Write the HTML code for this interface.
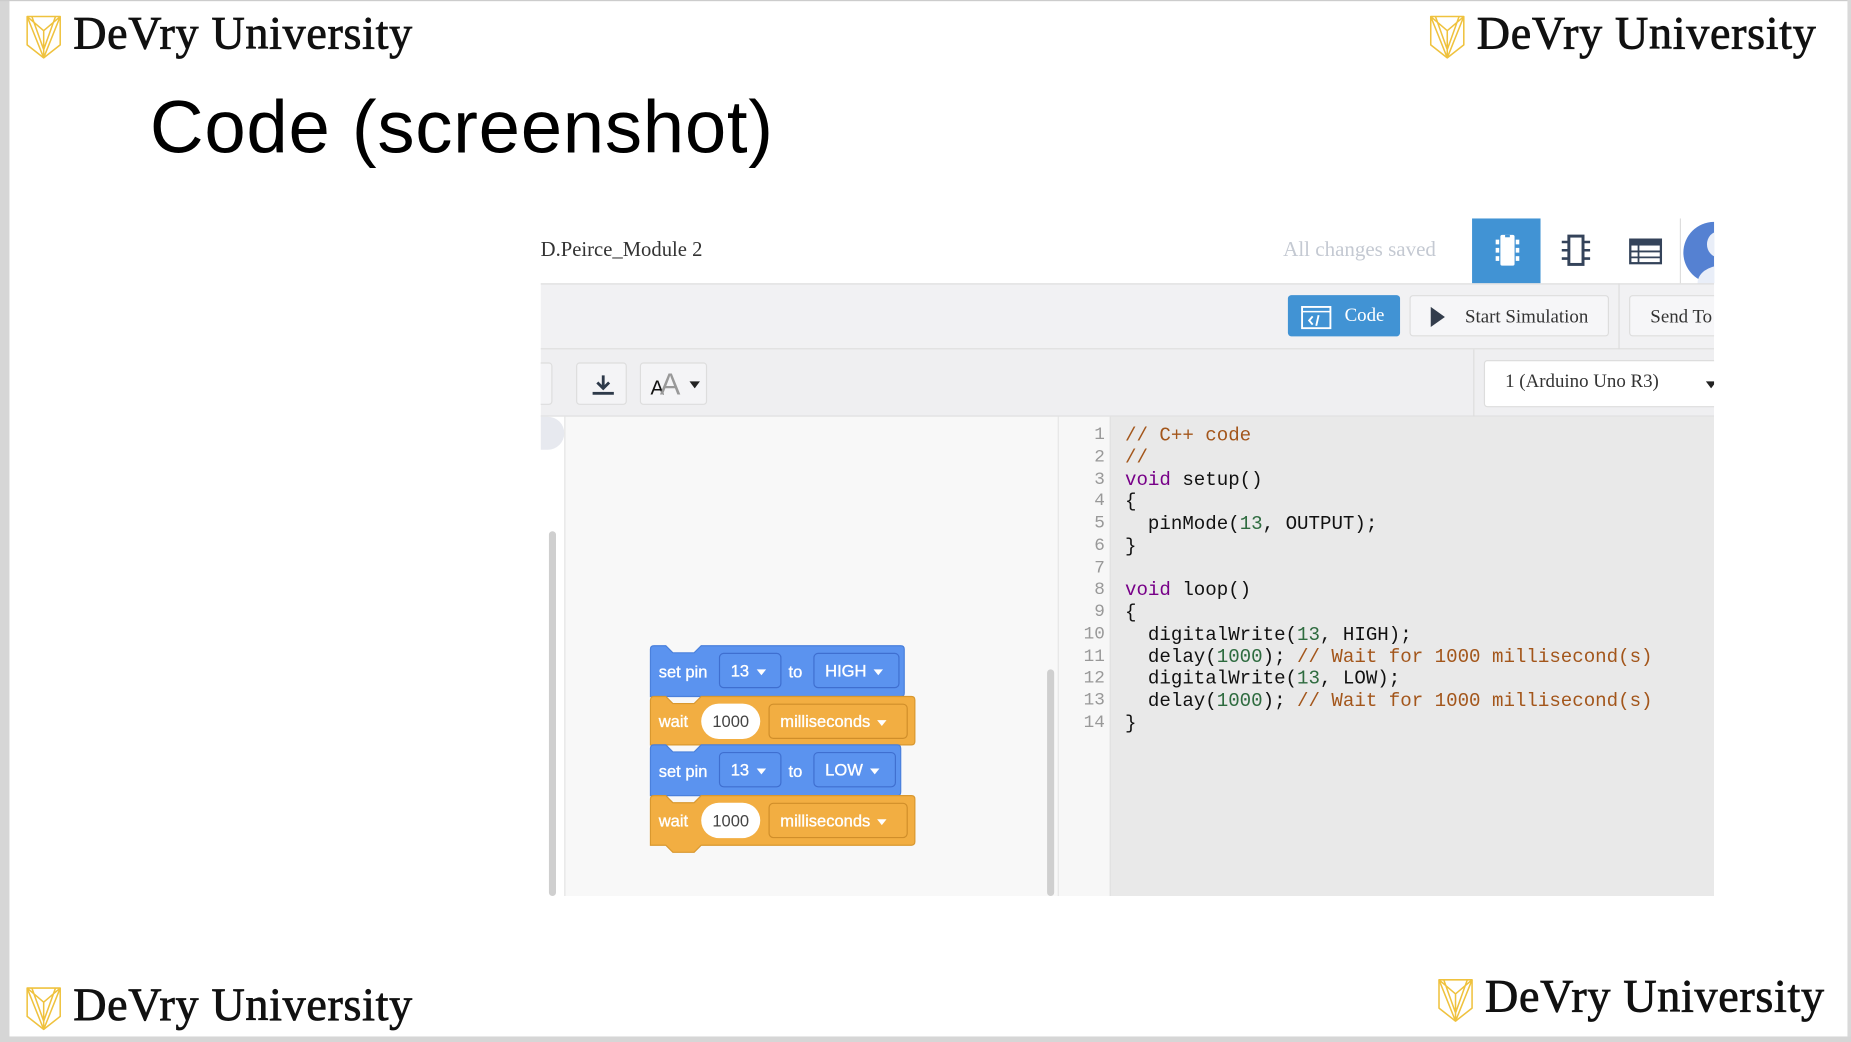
<!DOCTYPE html>
<html><head><meta charset="utf-8"><style>
*{margin:0;padding:0;box-sizing:border-box}
html,body{width:1851px;height:1042px;overflow:hidden;background:#d9d9d9}
#w{position:absolute;left:0;top:0;width:1568px;height:883px;transform:scale(1.18048);transform-origin:0 0;background:#fff}
.a{position:absolute}
.logo{position:absolute;height:40px}
.logo svg{position:absolute;left:0;top:0}
.logo span{position:absolute;left:40px;top:-6px;font-family:"Liberation Serif",serif;font-size:39px;letter-spacing:0.6px;color:#111;white-space:nowrap;-webkit-text-stroke:.7px #111}
.serif{font-family:"Liberation Serif",serif}
.mono{font-family:"Liberation Mono",monospace}
.btn{position:absolute;border:1px solid #ddd;border-radius:3px;background:#f4f4f6}
.blk{position:absolute;font-family:"Liberation Sans",sans-serif;font-size:14px;color:#fff;-webkit-text-stroke:.3px #fff}
.dd{position:absolute;border:1px solid #3f6fd0;border-radius:4px;height:30px;line-height:28px;padding-left:9px;font-size:14px}
.ddo{border-color:#d08e2a}
.pill{position:absolute;background:#fff;border-radius:15px;height:30px;line-height:30px;text-align:center;color:#444;font-size:14px;-webkit-text-stroke:0}
.tri{display:inline-block;width:0;height:0;border-left:4.5px solid transparent;border-right:4.5px solid transparent;border-top:5px solid #fff;vertical-align:middle;margin-left:6px}
.code div{height:18.75px;line-height:18.75px;white-space:pre}
.c{color:#a3561b}.k{color:#770088}.n{color:#2e6b3f}
</style></head><body>
<div id="w">
<div class="a" style="left:0;top:0;width:8px;height:883px;background:#d6d6d6"></div>
<div class="a" style="left:0;top:0;width:1568px;height:1px;background:#ccc"></div>
<div class="a" style="left:1565px;top:0;width:3px;height:883px;background:#d9d9d9"></div>
<div class="a" style="left:0;top:878px;width:1568px;height:5px;background:#d6d6d6"></div>

<svg width="0" height="0" style="position:absolute"><defs><g id="sh" fill="none" stroke="#efc23e" stroke-width="1.3" stroke-linejoin="round"><path d="M1 2 L29 2 L29 26 L15 37 L1 26 Z"/><path d="M1 2 L15 14 L29 2 M15 14 L15 37 M1 2 L15 37 M29 2 L15 37 M5 2 L15 30 M25 2 L15 30"/></g></defs></svg>

<div class="logo" style="left:22px;top:12px"><svg width="32" height="40"><use href="#sh"/></svg><span>DeVry University</span></div>
<div class="logo" style="left:1211px;top:12px"><svg width="32" height="40"><use href="#sh"/></svg><span>DeVry University</span></div>
<div class="logo" style="left:22px;top:835px"><svg width="32" height="40"><use href="#sh"/></svg><span>DeVry University</span></div>
<div class="logo" style="left:1218px;top:828px"><svg width="32" height="40"><use href="#sh"/></svg><span>DeVry University</span></div>

<div class="a" style="left:127px;top:72px;font-family:'Liberation Sans',sans-serif;font-size:63px;color:#000;letter-spacing:0.6px">Code (screenshot)</div>

<!-- app -->
<div class="a" style="left:458px;top:185px;width:994px;height:574px;background:#fff;overflow:hidden">
 <div class="a serif" style="left:0;top:16px;font-size:17.5px;color:#333">D.Peirce_Module 2</div>
 <div class="a serif" style="left:629px;top:16px;font-size:17.8px;color:#c4c9d2">All changes saved</div>
 <div class="a" style="left:789px;top:0;width:58px;height:55px;background:#4193d4">
  <svg class="a" style="left:19px;top:13px" width="22" height="28"><rect x="5" y="1" width="12" height="26" rx="1.5" fill="#fff"/><rect x="9" y="1" width="4" height="2" fill="#4193d4"/><rect x="1" y="5" width="3" height="4" fill="#fff"/><rect x="1" y="12" width="3" height="4" fill="#fff"/><rect x="1" y="19" width="3" height="4" fill="#fff"/><rect x="18" y="5" width="3" height="4" fill="#fff"/><rect x="18" y="12" width="3" height="4" fill="#fff"/><rect x="18" y="19" width="3" height="4" fill="#fff"/></svg>
 </div>
 <svg class="a" style="left:864px;top:13px" width="26" height="28"><rect x="7" y="2" width="12" height="24" fill="none" stroke="#34435a" stroke-width="2.5"/><path d="M1 7h6M1 14h6M1 21h6M19 7h6M19 14h6M19 21h6" stroke="#34435a" stroke-width="2.2"/></svg>
 <svg class="a" style="left:922px;top:17px" width="28" height="22"><rect x="1" y="1" width="26" height="20" fill="none" stroke="#34435a" stroke-width="2"/><rect x="1" y="1" width="26" height="5" fill="#34435a"/><path d="M1 11h26M1 16h26M8 6v15" stroke="#34435a" stroke-width="1.5"/></svg>
 <div class="a" style="left:965px;top:0;width:1px;height:55px;background:#ddd"></div>
 <div class="a" style="left:968px;top:3px;width:52px;height:52px;border-radius:50%;background:#5581d2"></div>
 <div class="a" style="left:988px;top:11px;width:20px;height:22px;border-radius:50%;background:#e9eef8"></div>
 <div class="a" style="left:980px;top:40px;width:40px;height:30px;border-radius:50%;background:#e9eef8"></div>

 <div class="a" style="left:0;top:55px;width:994px;height:56px;background:#f1f1f3;border-top:1px solid #ddd;border-bottom:1px solid #ddd"></div>
 <div class="a" style="left:633px;top:65px;width:95px;height:35px;background:#4193d4;border-radius:3px">
  <svg class="a" style="left:11px;top:9px" width="26" height="20"><rect x="1" y="1" width="24" height="18" fill="none" stroke="#fff" stroke-width="1.6"/><path d="M1 5h24" stroke="#fff" stroke-width="1.3"/><path d="M10 9l-3 3.5 3 3.5M15 8l-2 9" stroke="#fff" stroke-width="1.6" fill="none"/></svg>
  <span class="a serif" style="left:48px;top:9px;font-size:16px;color:#fff">Code</span>
 </div>
 <div class="btn" style="left:736px;top:65px;width:169px;height:35px;background:#f6f6f8">
  <svg class="a" style="left:16px;top:9px" width="14" height="17"><path d="M1 0L13 8.5L1 17Z" fill="#333d4c"/></svg>
  <span class="a serif" style="left:46px;top:9px;font-size:16px;color:#333;white-space:nowrap">Start Simulation</span>
 </div>
 <div class="a" style="left:913px;top:55px;width:1px;height:56px;background:#ddd"></div>
 <div class="btn" style="left:922px;top:65px;width:90px;height:35px;background:#f6f6f8"><span class="a serif" style="left:17px;top:9px;font-size:16px;color:#333;white-space:nowrap">Send To</span></div>

 <div class="a" style="left:0;top:111px;width:994px;height:57px;background:#efeff1;border-bottom:1px solid #ddd"></div>
 <div class="btn" style="left:-10px;top:122px;width:20px;height:36px;background:#f4f4f6"></div>
 <div class="btn" style="left:30px;top:122px;width:43px;height:36px">
  <svg class="a" style="left:12px;top:9px" width="20" height="18"><path d="M10 1v10M5 7l5 5 5-5" stroke="#2e3a4a" stroke-width="2.4" fill="none"/><rect x="1" y="15" width="18" height="2.4" fill="#2e3a4a"/></svg>
 </div>
 <div class="btn" style="left:84px;top:122px;width:57px;height:36px">
  <span class="a" style="left:8px;top:11px;font-family:'Liberation Sans',sans-serif;font-size:17px;color:#111">A</span>
  <span class="a" style="left:16px;top:2px;font-family:'Liberation Sans',sans-serif;font-size:26px;color:#999">A</span>
  <svg class="a" style="left:41px;top:15px" width="9" height="6"><path d="M0 0h9L4.5 6z" fill="#222"/></svg>
 </div>
 <div class="a" style="left:790px;top:111px;width:1px;height:57px;background:#ddd"></div>
 <div class="btn" style="left:799px;top:120px;width:205px;height:40px;background:#fff"><span class="a serif" style="left:17px;top:9px;font-size:16px;color:#333;white-space:nowrap">1 (Arduino Uno R3)</span><svg class="a" style="left:187px;top:17px" width="9" height="6"><path d="M0 0h9L4.5 6z" fill="#222"/></svg></div>

 <!-- blocks area -->
 <div class="a" style="left:0;top:168px;width:20px;height:406px;background:#fff"></div>
 <div class="a" style="left:0;top:168px;width:20px;height:28px;border-radius:0 14px 14px 0;background:#e7e9ef"></div>
 <div class="a" style="left:7px;top:265px;width:6px;height:309px;border-radius:3px;background:#cfcfcf"></div>
 <div class="a" style="left:20px;top:168px;width:419px;height:406px;background:#f8f8f8;border-left:1px solid #e4e4e4;border-right:1px solid #e4e4e4"></div>
 <div class="a" style="left:429px;top:382px;width:6px;height:192px;border-radius:3px;background:#cfcfcf"></div>

 <svg class="a" style="left:92px;top:361px" width="230" height="180">
  <path d="M1 4Q1 1 4 1H14L20 7H38L44 1H213Q216 1 216 4V41Q216 44 213 44H1Z" fill="#5b93ef" stroke="#4a80dc"/>
  <path d="M1 47Q1 44 4 44H14L20 50H38L44 44H222Q225 44 225 47V82Q225 85 222 85H1Z" fill="#f2ae42" stroke="#d9982f"/>
  <path d="M1 88Q1 85 4 85H14L20 91H38L44 85H210Q213 85 213 88V125Q213 128 210 128H1Z" fill="#5b93ef" stroke="#4a80dc"/>
  <path d="M1 131Q1 128 4 128H14L20 134H38L44 128H222Q225 128 225 131V167Q225 170 222 170H44L38 176H20L14 170H1Z" fill="#f2ae42" stroke="#d9982f"/>
 </svg>
 <div class="blk" style="left:100px;top:376px">set pin</div>
 <div class="blk dd" style="left:151px;top:368px;width:53px">13<span class="tri"></span></div>
 <div class="blk" style="left:210px;top:376px">to</div>
 <div class="blk dd" style="left:231px;top:368px;width:73px">HIGH<span class="tri"></span></div>
 <div class="blk" style="left:100px;top:418px">wait</div>
 <div class="blk pill" style="left:136px;top:411px;width:50px">1000</div>
 <div class="blk dd ddo" style="left:193px;top:411px;width:118px">milliseconds<span class="tri"></span></div>
 <div class="blk" style="left:100px;top:460px">set pin</div>
 <div class="blk dd" style="left:151px;top:452px;width:53px">13<span class="tri"></span></div>
 <div class="blk" style="left:210px;top:460px">to</div>
 <div class="blk dd" style="left:231px;top:452px;width:70px">LOW<span class="tri"></span></div>
 <div class="blk" style="left:100px;top:502px">wait</div>
 <div class="blk pill" style="left:136px;top:495px;width:50px">1000</div>
 <div class="blk dd ddo" style="left:193px;top:495px;width:118px">milliseconds<span class="tri"></span></div>

 <!-- code -->
 <div class="a" style="left:439px;top:168px;width:44px;height:406px;background:#f7f7f7;border-right:1px solid #ddd"></div>
 <div class="a" style="left:483px;top:168px;width:511px;height:406px;background:#e9e9e9"></div>
 <div class="a mono code" style="left:441px;top:175px;width:37px;text-align:right;font-size:15px;color:#999">
  <div>1</div><div>2</div><div>3</div><div>4</div><div>5</div><div>6</div><div>7</div><div>8</div><div>9</div><div>10</div><div>11</div><div>12</div><div>13</div><div>14</div>
 </div>
 <div class="a mono code" style="left:495px;top:175px;font-size:16.2px;color:#111">
<div class="c">// C++ code</div><div class="c">//</div><div><span class="k">void</span> setup()</div><div>{</div><div>  pinMode(<span class="n">13</span>, OUTPUT);</div><div>}</div><div> </div><div><span class="k">void</span> loop()</div><div>{</div><div>  digitalWrite(<span class="n">13</span>, HIGH);</div><div>  delay(<span class="n">1000</span>); <span class="c">// Wait for 1000 millisecond(s)</span></div><div>  digitalWrite(<span class="n">13</span>, LOW);</div><div>  delay(<span class="n">1000</span>); <span class="c">// Wait for 1000 millisecond(s)</span></div><div>}</div>
 </div>
</div>
</div>
</body></html>
